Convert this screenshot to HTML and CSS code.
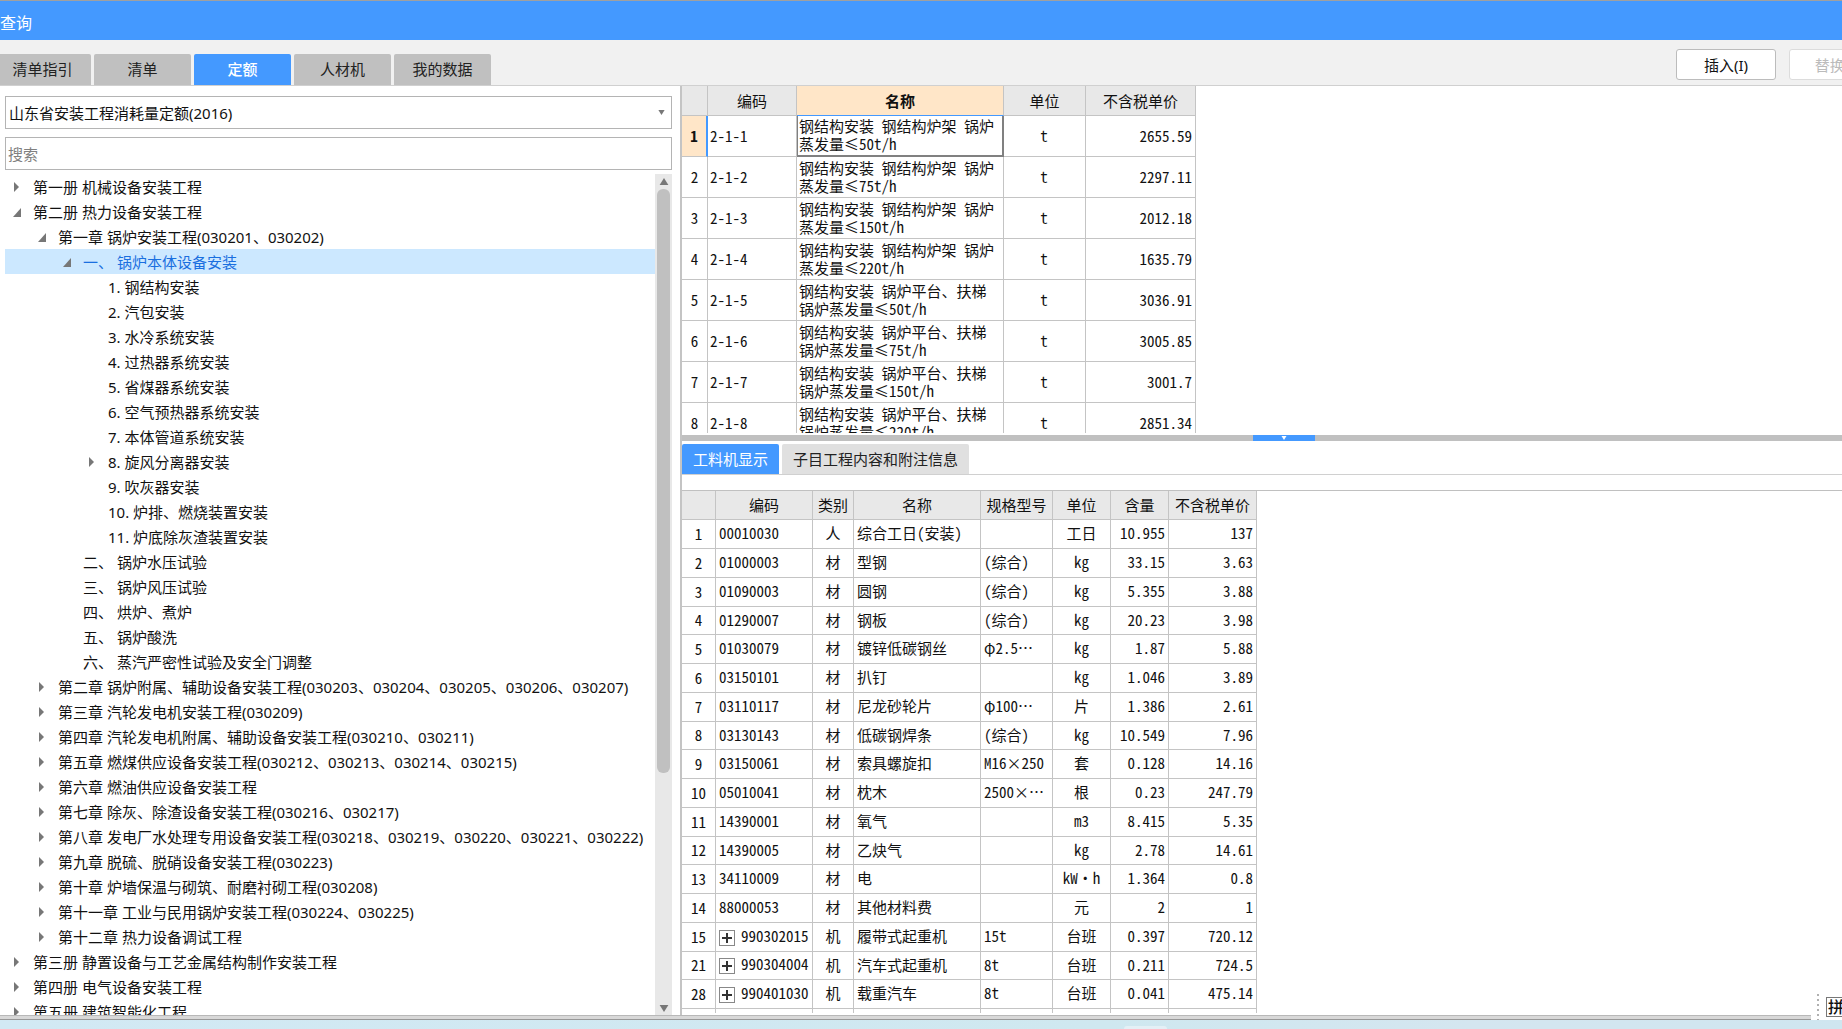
FILE: index.html
```html
<!DOCTYPE html>
<html lang="zh-CN">
<head>
<meta charset="utf-8">
<title>查询</title>
<link rel="stylesheet" href="styles.css">
</head>
<body>
<svg class="defs" aria-hidden="true">
  <symbol id="closed" viewBox="0 0 12 12"><path d="M4 1 L9 6 L4 11 Z"/></symbol>
  <symbol id="open" viewBox="0 0 12 12"><path d="M11 2 V11 H3 Z"/></symbol>
  <symbol id="up" viewBox="0 0 10 8"><path d="M5 0 L10 8 H0 Z"/></symbol>
  <symbol id="down" viewBox="0 0 10 8"><path d="M0 0 H10 L5 8 Z"/></symbol>
</svg>
<div class="window">
  <header class="titlebar"><h1>查询</h1></header>
  <div class="toolbar">
    <nav class="tabs">
      <button class="tab">清单指引</button>
      <button class="tab">清单</button>
      <button class="tab active">定额</button>
      <button class="tab">人材机</button>
      <button class="tab">我的数据</button>
    </nav>
    <div class="actions">
      <button class="action">插入(I)</button>
      <button class="action" disabled>替换(R)</button>
    </div>
  </div>
  <main class="main">
    <section class="sidebar">
      <div class="combo">
        <select aria-label="定额库"><option>山东省安装工程消耗量定额(2016)</option></select>
        <svg class="caret"><use href="#down"/></svg>
      </div>
      <input class="search" type="text" placeholder="搜索" aria-label="搜索">
      <div class="treebox">
        <ul class="tree">
          <li class="l0"><button class="toggle" aria-label="展开"><svg><use href="#closed"/></svg></button>第一册 机械设备安装工程</li>
          <li class="l0"><button class="toggle" aria-label="折叠"><svg><use href="#open"/></svg></button>第二册 热力设备安装工程</li>
          <li class="l1"><button class="toggle" aria-label="折叠"><svg><use href="#open"/></svg></button>第一章 锅炉安装工程(030201、030202)</li>
          <li class="l2 selected"><button class="toggle" aria-label="折叠"><svg><use href="#open"/></svg></button>一、 锅炉本体设备安装</li>
          <li class="l3 leaf">1. 钢结构安装</li>
          <li class="l3 leaf">2. 汽包安装</li>
          <li class="l3 leaf">3. 水冷系统安装</li>
          <li class="l3 leaf">4. 过热器系统安装</li>
          <li class="l3 leaf">5. 省煤器系统安装</li>
          <li class="l3 leaf">6. 空气预热器系统安装</li>
          <li class="l3 leaf">7. 本体管道系统安装</li>
          <li class="l3"><button class="toggle" aria-label="展开"><svg><use href="#closed"/></svg></button>8. 旋风分离器安装</li>
          <li class="l3 leaf">9. 吹灰器安装</li>
          <li class="l3 leaf">10. 炉排、燃烧装置安装</li>
          <li class="l3 leaf">11. 炉底除灰渣装置安装</li>
          <li class="l2 leaf">二、 锅炉水压试验</li>
          <li class="l2 leaf">三、 锅炉风压试验</li>
          <li class="l2 leaf">四、 烘炉、煮炉</li>
          <li class="l2 leaf">五、 锅炉酸洗</li>
          <li class="l2 leaf">六、 蒸汽严密性试验及安全门调整</li>
          <li class="l1"><button class="toggle" aria-label="展开"><svg><use href="#closed"/></svg></button>第二章 锅炉附属、辅助设备安装工程(030203、030204、030205、030206、030207)</li>
          <li class="l1"><button class="toggle" aria-label="展开"><svg><use href="#closed"/></svg></button>第三章 汽轮发电机安装工程(030209)</li>
          <li class="l1"><button class="toggle" aria-label="展开"><svg><use href="#closed"/></svg></button>第四章 汽轮发电机附属、辅助设备安装工程(030210、030211)</li>
          <li class="l1"><button class="toggle" aria-label="展开"><svg><use href="#closed"/></svg></button>第五章 燃煤供应设备安装工程(030212、030213、030214、030215)</li>
          <li class="l1"><button class="toggle" aria-label="展开"><svg><use href="#closed"/></svg></button>第六章 燃油供应设备安装工程</li>
          <li class="l1"><button class="toggle" aria-label="展开"><svg><use href="#closed"/></svg></button>第七章 除灰、除渣设备安装工程(030216、030217)</li>
          <li class="l1"><button class="toggle" aria-label="展开"><svg><use href="#closed"/></svg></button>第八章 发电厂水处理专用设备安装工程(030218、030219、030220、030221、030222)</li>
          <li class="l1"><button class="toggle" aria-label="展开"><svg><use href="#closed"/></svg></button>第九章 脱硫、脱硝设备安装工程(030223)</li>
          <li class="l1"><button class="toggle" aria-label="展开"><svg><use href="#closed"/></svg></button>第十章 炉墙保温与砌筑、耐磨衬砌工程(030208)</li>
          <li class="l1"><button class="toggle" aria-label="展开"><svg><use href="#closed"/></svg></button>第十一章 工业与民用锅炉安装工程(030224、030225)</li>
          <li class="l1"><button class="toggle" aria-label="展开"><svg><use href="#closed"/></svg></button>第十二章 热力设备调试工程</li>
          <li class="l0"><button class="toggle" aria-label="展开"><svg><use href="#closed"/></svg></button>第三册 静置设备与工艺金属结构制作安装工程</li>
          <li class="l0"><button class="toggle" aria-label="展开"><svg><use href="#closed"/></svg></button>第四册 电气设备安装工程</li>
          <li class="l0"><button class="toggle" aria-label="展开"><svg><use href="#closed"/></svg></button>第五册 建筑智能化工程</li>
        </ul>
        <div class="scrollbar">
          <svg class="arrow"><use href="#up"/></svg>
          <div class="track"><div class="thumb"></div></div>
          <svg class="arrow"><use href="#down"/></svg>
        </div>
      </div>
    </section>
    <section class="content">
      <div class="pane">
        <table class="grid quota">
          <colgroup><col class="c-no"><col class="c-code"><col class="c-name"><col class="c-unit"><col class="c-price"></colgroup>
          <thead><tr><th></th><th>编码</th><th class="current">名称</th><th>单位</th><th>不含税单价</th></tr></thead>
          <tbody>
            <tr class="current"><th>1</th><td>2-1-1</td><td class="cell">钢结构安装 钢结构炉架 锅炉<br>蒸发量≤50t/h</td><td class="mid">t</td><td class="num">2655.59</td></tr>
            <tr><th>2</th><td>2-1-2</td><td>钢结构安装 钢结构炉架 锅炉<br>蒸发量≤75t/h</td><td class="mid">t</td><td class="num">2297.11</td></tr>
            <tr><th>3</th><td>2-1-3</td><td>钢结构安装 钢结构炉架 锅炉<br>蒸发量≤150t/h</td><td class="mid">t</td><td class="num">2012.18</td></tr>
            <tr><th>4</th><td>2-1-4</td><td>钢结构安装 钢结构炉架 锅炉<br>蒸发量≤220t/h</td><td class="mid">t</td><td class="num">1635.79</td></tr>
            <tr><th>5</th><td>2-1-5</td><td>钢结构安装 锅炉平台、扶梯<br>锅炉蒸发量≤50t/h</td><td class="mid">t</td><td class="num">3036.91</td></tr>
            <tr><th>6</th><td>2-1-6</td><td>钢结构安装 锅炉平台、扶梯<br>锅炉蒸发量≤75t/h</td><td class="mid">t</td><td class="num">3005.85</td></tr>
            <tr><th>7</th><td>2-1-7</td><td>钢结构安装 锅炉平台、扶梯<br>锅炉蒸发量≤150t/h</td><td class="mid">t</td><td class="num">3001.7</td></tr>
            <tr><th>8</th><td>2-1-8</td><td>钢结构安装 锅炉平台、扶梯<br>锅炉蒸发量≤220t/h</td><td class="mid">t</td><td class="num">2851.34</td></tr>
          </tbody>
        </table>
      </div>
      <div class="splitter"><button class="handle" aria-label="收起"><svg><use href="#down"/></svg></button></div>
      <div class="detail">
        <nav class="subtabs">
          <button class="subtab active">工料机显示</button>
          <button class="subtab">子目工程内容和附注信息</button>
        </nav>
        <div class="pane lower">
          <table class="grid parts">
            <colgroup><col class="p-no"><col class="p-code"><col class="p-kind"><col class="p-name"><col class="p-spec"><col class="p-unit"><col class="p-qty"><col class="p-price"></colgroup>
            <thead><tr><th></th><th>编码</th><th>类别</th><th>名称</th><th>规格型号</th><th>单位</th><th>含量</th><th>不含税单价</th></tr></thead>
            <tbody>
              <tr><th>1</th><td>00010030</td><td class="mid">人</td><td>综合工日(安装)</td><td></td><td class="mid">工日</td><td class="num">10.955</td><td class="num">137</td></tr>
              <tr><th>2</th><td>01000003</td><td class="mid">材</td><td>型钢</td><td>(综合)</td><td class="mid">kg</td><td class="num">33.15</td><td class="num">3.63</td></tr>
              <tr><th>3</th><td>01090003</td><td class="mid">材</td><td>圆钢</td><td>(综合)</td><td class="mid">kg</td><td class="num">5.355</td><td class="num">3.88</td></tr>
              <tr><th>4</th><td>01290007</td><td class="mid">材</td><td>钢板</td><td>(综合)</td><td class="mid">kg</td><td class="num">20.23</td><td class="num">3.98</td></tr>
              <tr><th>5</th><td>01030079</td><td class="mid">材</td><td>镀锌低碳钢丝</td><td>φ2.5⋯</td><td class="mid">kg</td><td class="num">1.87</td><td class="num">5.88</td></tr>
              <tr><th>6</th><td>03150101</td><td class="mid">材</td><td>扒钉</td><td></td><td class="mid">kg</td><td class="num">1.046</td><td class="num">3.89</td></tr>
              <tr><th>7</th><td>03110117</td><td class="mid">材</td><td>尼龙砂轮片</td><td>φ100⋯</td><td class="mid">片</td><td class="num">1.386</td><td class="num">2.61</td></tr>
              <tr><th>8</th><td>03130143</td><td class="mid">材</td><td>低碳钢焊条</td><td>(综合)</td><td class="mid">kg</td><td class="num">10.549</td><td class="num">7.96</td></tr>
              <tr><th>9</th><td>03150061</td><td class="mid">材</td><td>索具螺旋扣</td><td>M16×250</td><td class="mid">套</td><td class="num">0.128</td><td class="num">14.16</td></tr>
              <tr><th>10</th><td>05010041</td><td class="mid">材</td><td>枕木</td><td>2500×⋯</td><td class="mid">根</td><td class="num">0.23</td><td class="num">247.79</td></tr>
              <tr><th>11</th><td>14390001</td><td class="mid">材</td><td>氧气</td><td></td><td class="mid">m3</td><td class="num">8.415</td><td class="num">5.35</td></tr>
              <tr><th>12</th><td>14390005</td><td class="mid">材</td><td>乙炔气</td><td></td><td class="mid">kg</td><td class="num">2.78</td><td class="num">14.61</td></tr>
              <tr><th>13</th><td>34110009</td><td class="mid">材</td><td>电</td><td></td><td class="mid">kW·h</td><td class="num">1.364</td><td class="num">0.8</td></tr>
              <tr><th>14</th><td>88000053</td><td class="mid">材</td><td>其他材料费</td><td></td><td class="mid">元</td><td class="num">2</td><td class="num">1</td></tr>
              <tr><th>15</th><td><button class="expand" aria-label="展开"></button>990302015</td><td class="mid">机</td><td>履带式起重机</td><td>15t</td><td class="mid">台班</td><td class="num">0.397</td><td class="num">720.12</td></tr>
              <tr><th>21</th><td><button class="expand" aria-label="展开"></button>990304004</td><td class="mid">机</td><td>汽车式起重机</td><td>8t</td><td class="mid">台班</td><td class="num">0.211</td><td class="num">724.5</td></tr>
              <tr><th>28</th><td><button class="expand" aria-label="展开"></button>990401030</td><td class="mid">机</td><td>载重汽车</td><td>8t</td><td class="mid">台班</td><td class="num">0.041</td><td class="num">475.14</td></tr>
              <tr><th></th><td></td><td></td><td></td><td></td><td></td><td></td><td></td></tr>
            </tbody>
          </table>
        </div>
      </div>
    </section>
  </main>
  <footer class="frame"></footer>
</div>
<div class="desktop"><span class="glint"></span></div>
<aside class="ime"><span class="grip"></span><span class="mode">拼</span></aside>
</body>
</html>
```
FILE: styles.css
```css
* { box-sizing: border-box; }

body {
  margin: 0;
  height: 100vh;
  display: flex;
  flex-direction: column;
  overflow: hidden;
  position: relative;
  background: #fff;
  color: #111;
  font: 15px/24px "Noto Sans", "Noto Sans CJK SC", sans-serif;
}

button, input, select { font: inherit; color: inherit; margin: 0; padding: 0; border: 0; }
svg { display: block; fill: #777; }
.defs { position: absolute; width: 0; height: 0; }

/* The window runs past the right edge of the screen */
.window {
  flex: 1;
  min-height: 0;
  width: calc(100% + 47px);
  display: flex;
  flex-direction: column;
}

.titlebar {
  flex: none;
  height: 40px;
  border-top: 1px solid #a0a0a0;
  background: #4499ff;
  display: flex;
  align-items: center;
  padding-top: 4px;
}
.titlebar h1 { margin: 0; font-size: 16px; font-weight: 400; color: #fff; }

.toolbar {
  flex: none;
  height: 46px;
  background: #f1f1f1;
  border-bottom: 1px solid #d0d0d0;
  display: flex;
  justify-content: space-between;
  align-items: flex-end;
}
.tabs { display: flex; gap: 3px; margin-left: -6px; }
.tab {
  width: 97px;
  height: 31px;
  padding-bottom: 2px;
  background: #c0c0c0;
  border-radius: 2px 2px 0 0;
  color: #222;
}
.tab.active { background: #4499ff; color: #fff; font-weight: 500; }
.actions { display: flex; gap: 13px; align-self: flex-start; padding-top: 9px; }
.action {
  width: 100px;
  height: 31px;
  background: #fff;
  border: 1px solid #bcbcbc;
  border-radius: 3px;
}
.action:disabled { border-color: #dcdcdc; color: #bbb; }

.main {
  flex: 1;
  min-height: 0;
  display: grid;
  grid-template-columns: 680px 1fr;
}

.sidebar {
  min-height: 0;
  display: flex;
  flex-direction: column;
  padding: 10px 8px 0 5px;
}
.combo { position: relative; flex: none; height: 33px; }
.combo select {
  width: 100%;
  height: 100%;
  padding: 0 3px;
  border: 1px solid #b4b4b4;
  background: #fff;
  appearance: none;
}
.caret { position: absolute; right: 7px; top: 14px; width: 7px; height: 5px; }
.search {
  flex: none;
  height: 33px;
  margin-top: 8px;
  padding: 0 2px;
  border: 1px solid #b4b4b4;
}
.search::placeholder { color: #808080; opacity: 1; }

.treebox {
  flex: 1;
  min-height: 0;
  margin-top: 4px;
  display: grid;
  grid-template-columns: 1fr 17px;
}
.tree { margin: 0; padding: 0; list-style: none; overflow: hidden; min-height: 0; }
.tree li {
  height: 25px;
  display: flex;
  align-items: center;
  white-space: pre;
}
.tree .l0 { padding-left: 5px; }
.tree .l1 { padding-left: 30px; }
.tree .l2 { padding-left: 55px; }
.tree .l3 { padding-left: 80px; }
.tree .leaf::before { content: ""; width: 23px; }
.tree .selected { background: #cce8ff; color: #1a6fe0; }
.toggle { width: 23px; height: 12px; background: none; }
.toggle svg { width: 12px; height: 12px; }

.scrollbar {
  background: #e8e8e8;
  display: flex;
  flex-direction: column;
  align-items: center;
  padding: 4px 0 3px;
}
.scrollbar .arrow { width: 10px; height: 7px; }
.track { flex: 1; width: 13px; padding: 4px 0 5px; }
.thumb { height: 72%; background: #c0c0c0; border-radius: 6px; }

.content {
  min-width: 0;
  min-height: 0;
  display: grid;
  grid-template-rows: 349fr 6px 575fr;
  border-left: 2px solid #c4c4c4;
}
.pane { min-height: 0; overflow: hidden; margin-bottom: 2px; }
.splitter { background: #c0c0c0; display: flex; justify-content: center; }
.handle { width: 62px; height: 6px; margin-right: 4px; background: #4499ff; display: flex; align-items: center; justify-content: center; }
.handle svg { width: 6px; height: 4px; fill: #fff; }

.detail { min-height: 0; display: flex; flex-direction: column; padding-top: 3px; }
.subtabs { flex: none; display: flex; gap: 3px; border-bottom: 1px solid #d0d0d0; }
.subtab { height: 30px; padding: 0 11px; background: #e0e0e0; border-radius: 2px 2px 0 0; color: #222; }
.subtab.active { background: #4499ff; color: #fff; }
.lower { flex: 1; margin-top: 15px; border-top: 1px solid #c0c0c0; }

.grid {
  table-layout: fixed;
  border-collapse: separate;
  border-spacing: 0;
  line-height: 18px;
  font-family: "Noto Sans Mono CJK SC", "Noto Sans CJK SC", sans-serif;
}
.grid th, .grid td {
  padding: 0 3px 1px 2px;
  border-right: 1px solid #c4c4c4;
  border-bottom: 1px solid #c4c4c4;
  font-weight: 400;
  text-align: left;
  white-space: nowrap;
  overflow: hidden;
}
.grid th { padding: 0; text-align: center; }
.grid thead th { height: 29px; background: #e8e8e8; }
.grid .mid { text-align: center; }
.grid .num { text-align: right; }

.quota { width: 514px; }
.quota thead th { height: 30px; }
.quota tbody tr { height: 41px; }
.quota thead .current { background: #ffe6c8; font-weight: 700; border-bottom-color: #4499ff; }
.quota tbody .current th { background: #ffe6c8; font-weight: 700; border-right: 2px solid #4499ff; }
.quota .cell { border-right: 2px solid #808080; border-bottom: 2px solid #808080; box-shadow: inset 1px 0 #808080; }
.c-no { width: 26px; }
.c-code { width: 89px; }
.c-name { width: 207px; }
.c-unit { width: 82px; }
.c-price { width: 110px; }

.parts { width: 575px; }
.parts tbody tr { height: 29px; }
.parts tbody tr:nth-child(4n) { height: 28px; }
.parts td { padding-left: 3px; }
.p-no { width: 34px; }
.p-code { width: 97px; }
.p-kind { width: 41px; }
.p-name { width: 127px; }
.p-spec { width: 72px; }
.p-unit { width: 58px; }
.p-qty { width: 58px; }
.p-price { width: 88px; }

.expand {
  width: 16px;
  height: 16px;
  margin-right: 6px;
  border: 1px solid #888;
  vertical-align: -3px;
  background:
    linear-gradient(#333, #333) center / 10px 2px no-repeat,
    linear-gradient(#333, #333) center / 2px 10px no-repeat,
    #fff;
}

.frame { flex: none; height: 5px; background: #d8d8d8; border-top: 1px solid #b8b8b8; border-bottom: 1px solid #989898; }
.desktop {
  flex: none;
  height: 9px;
  display: flex;
  align-items: flex-end;
  background: linear-gradient(90deg, #d2e9f4, #cfe8f0 60%, #d4e6f0 80%, #cfe6f0);
}
.glint { width: 43px; height: 3px; margin-left: 61%; border-radius: 4px 4px 0 0; background: #e4f0f6; }

/* Input method bar floating over the window corner */
.ime {
  position: absolute;
  right: 0;
  bottom: 9px;
  width: 31px;
  height: 26px;
  overflow: hidden;
  display: flex;
  align-items: center;
  gap: 7px;
  padding-left: 6px;
  background: #fff;
}
.grip { flex: none; width: 2px; height: 26px; background: repeating-linear-gradient(#b0b0b0 0 2px, #fff 2px 5px); }
.mode { flex: none; width: 20px; height: 20px; border: 1px solid #777; line-height: 18px; font-size: 16px; font-weight: 500; text-align: center; }
```
